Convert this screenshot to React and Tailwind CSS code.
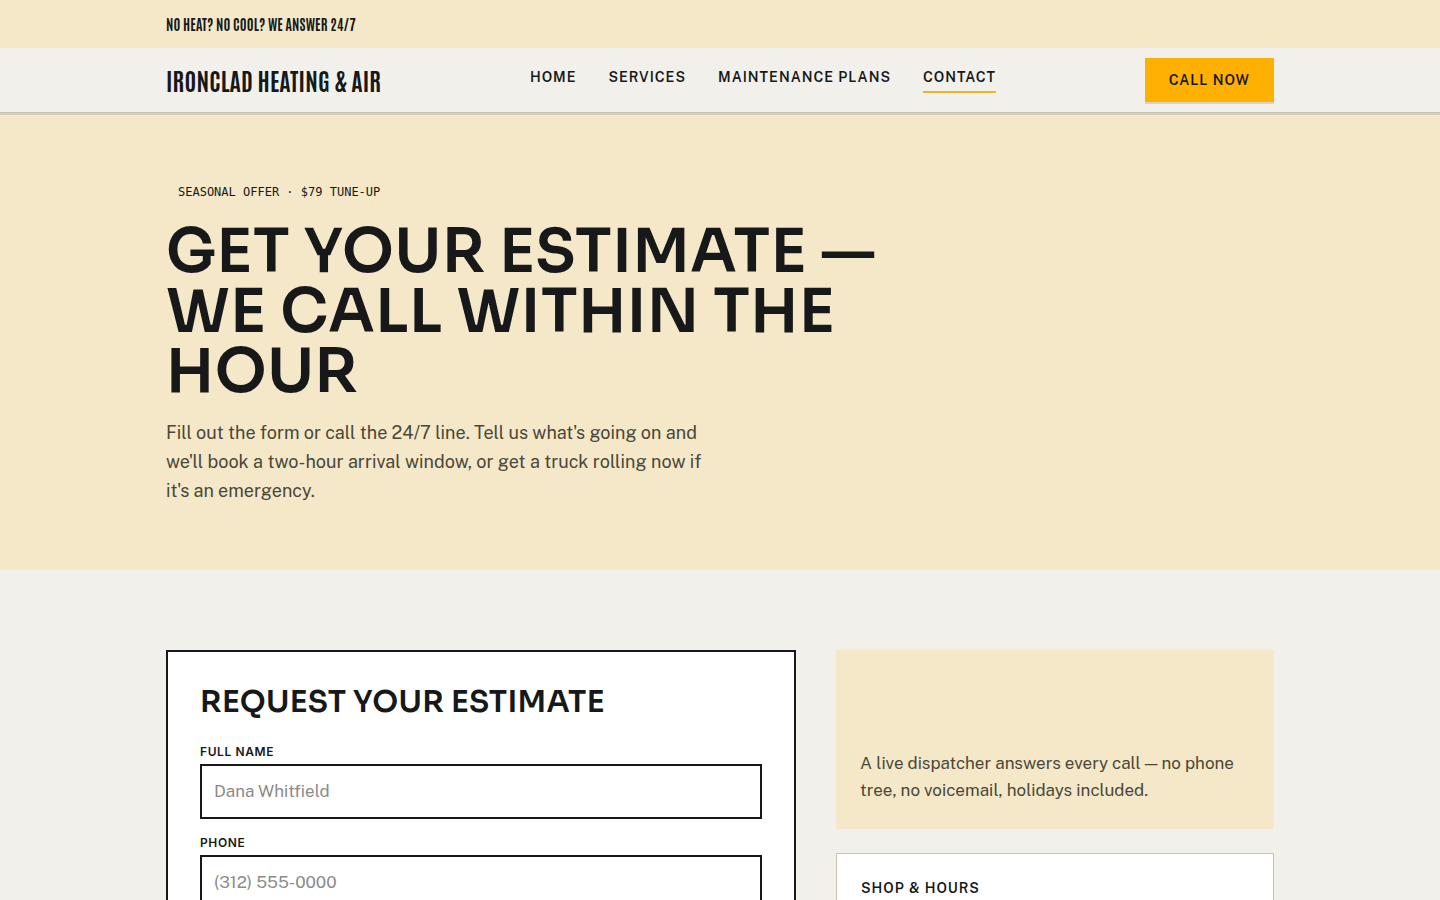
const navLinks = [
  { label: 'Home', href: '#home' },
  { label: 'Services', href: '#services' },
  { label: 'Maintenance Plans', href: '#plans' },
  { label: 'Contact', href: '#contact', active: true },
];

const fields = [
  { id: 'name', label: 'Full name', type: 'text', placeholder: 'Dana Whitfield' },
  { id: 'phone', label: 'Phone', type: 'tel', placeholder: '(312) 555-0000' },
];

function TopBar() {
  return (
    <div className="bg-[#f4e8c8]">
      <div className="mx-auto flex h-12 max-w-[1172px] items-center px-8">
        <p className="font-['Antonio','Roboto_Condensed','Liberation_Sans_Narrow',sans-serif] text-sm font-bold tracking-[0.01em] uppercase">
          No heat? No cool? We answer 24/7
        </p>
      </div>
    </div>
  );
}

function Header() {
  return (
    <header className="relative border-b border-[#c8c3b4] bg-[#f1f0eb] shadow-[0_2px_0_#d6cdb4]">
      <div className="mx-auto flex h-16 max-w-[1172px] items-center justify-between px-8">
        <a
          href="#home"
          className="font-['Antonio','Roboto_Condensed','Liberation_Sans_Narrow',sans-serif] text-2xl font-bold tracking-[0.01em] whitespace-nowrap uppercase"
        >
          Ironclad Heating &amp; Air
        </a>
        <nav className="flex gap-8">
          {navLinks.map((link) => (
            <a
              key={link.label}
              href={link.href}
              className={
                link.active
                  ? 'border-b-2 border-[#f0b429] pb-1 text-sm leading-5 font-semibold tracking-[0.07em] whitespace-nowrap uppercase'
                  : 'border-b-2 border-transparent pb-1 text-sm leading-5 font-semibold tracking-[0.07em] whitespace-nowrap uppercase'
              }
            >
              {link.label}
            </a>
          ))}
        </nav>
        <button
          type="button"
          className="h-11 bg-[#ffb000] px-6 text-sm font-semibold tracking-[0.07em] whitespace-nowrap uppercase shadow-[0_2px_0_#d9d3c3]"
        >
          Call now
        </button>
      </div>
    </header>
  );
}

function Hero() {
  return (
    <section className="bg-[#f4e8c8]">
      <div className="mx-auto max-w-[1172px] px-8 pt-16 pb-[65px]">
        <p className="px-3 font-['DejaVu_Sans_Mono',monospace] text-xs leading-[30px] uppercase">
          Seasonal offer · $79 tune‑up
        </p>
        <h1 className="mt-[15px] max-w-[760px] font-['Sora','Public_Sans','Inter',sans-serif] text-[60px] leading-[60px] font-semibold tracking-[0.01em] uppercase">
          Get your estimate — we call within the hour
        </h1>
        <p className="mt-4 max-w-[560px] text-lg leading-[29px] text-[#4a4738]">
          Fill out the form or call the 24/7 line. Tell us what's going on and we'll book a two-hour arrival window, or
          get a truck rolling now if it's an emergency.
        </p>
      </div>
    </section>
  );
}

function EstimateForm() {
  return (
    <form className="border-2 border-[#17181a] bg-white p-8">
      <h2 className="font-['Sora','Public_Sans','Inter',sans-serif] text-[30px] leading-9 font-semibold tracking-[0.01em] uppercase">
        Request your estimate
      </h2>
      <div className="mt-5 flex flex-col gap-3">
        {fields.map((field) => (
          <div key={field.id} className="flex flex-col">
            <label
              htmlFor={field.id}
              className="font-['Inter','Liberation_Sans',sans-serif] text-xs leading-6 font-semibold tracking-wider uppercase"
            >
              {field.label}
            </label>
            <input
              id={field.id}
              name={field.id}
              type={field.type}
              placeholder={field.placeholder}
              className="h-[55px] w-full border-2 border-[#17181a] bg-white px-3 pb-0.5 text-[17px] outline-none placeholder:text-[#8b8b8b]"
            />
          </div>
        ))}
      </div>
    </form>
  );
}

function Sidebar() {
  return (
    <aside className="flex flex-col gap-6">
      <div className="bg-[#f4e8c8] px-6 pt-[100px] pb-[25px]">
        <p className="text-[17px] leading-[27px] text-[#4a4738]">
          A live dispatcher answers every call — no phone tree, no voicemail, holidays included.
        </p>
      </div>
      <div className="grow border border-[#c8c3b4] bg-white p-6">
        <h3 className="text-sm leading-5 font-semibold tracking-[0.07em] uppercase">Shop &amp; hours</h3>
      </div>
    </aside>
  );
}

export default function App() {
  return (
    <div className="min-h-screen bg-[#f1f0eb] font-['Public_Sans','Inter','Liberation_Sans',sans-serif] text-[#17181a]">
      <TopBar />
      <Header />
      <main>
        <Hero />
        <section className="mx-auto grid max-w-[1172px] grid-cols-[59fr_41fr] gap-10 px-8 py-20">
          <EstimateForm />
          <Sidebar />
        </section>
      </main>
    </div>
  );
}
